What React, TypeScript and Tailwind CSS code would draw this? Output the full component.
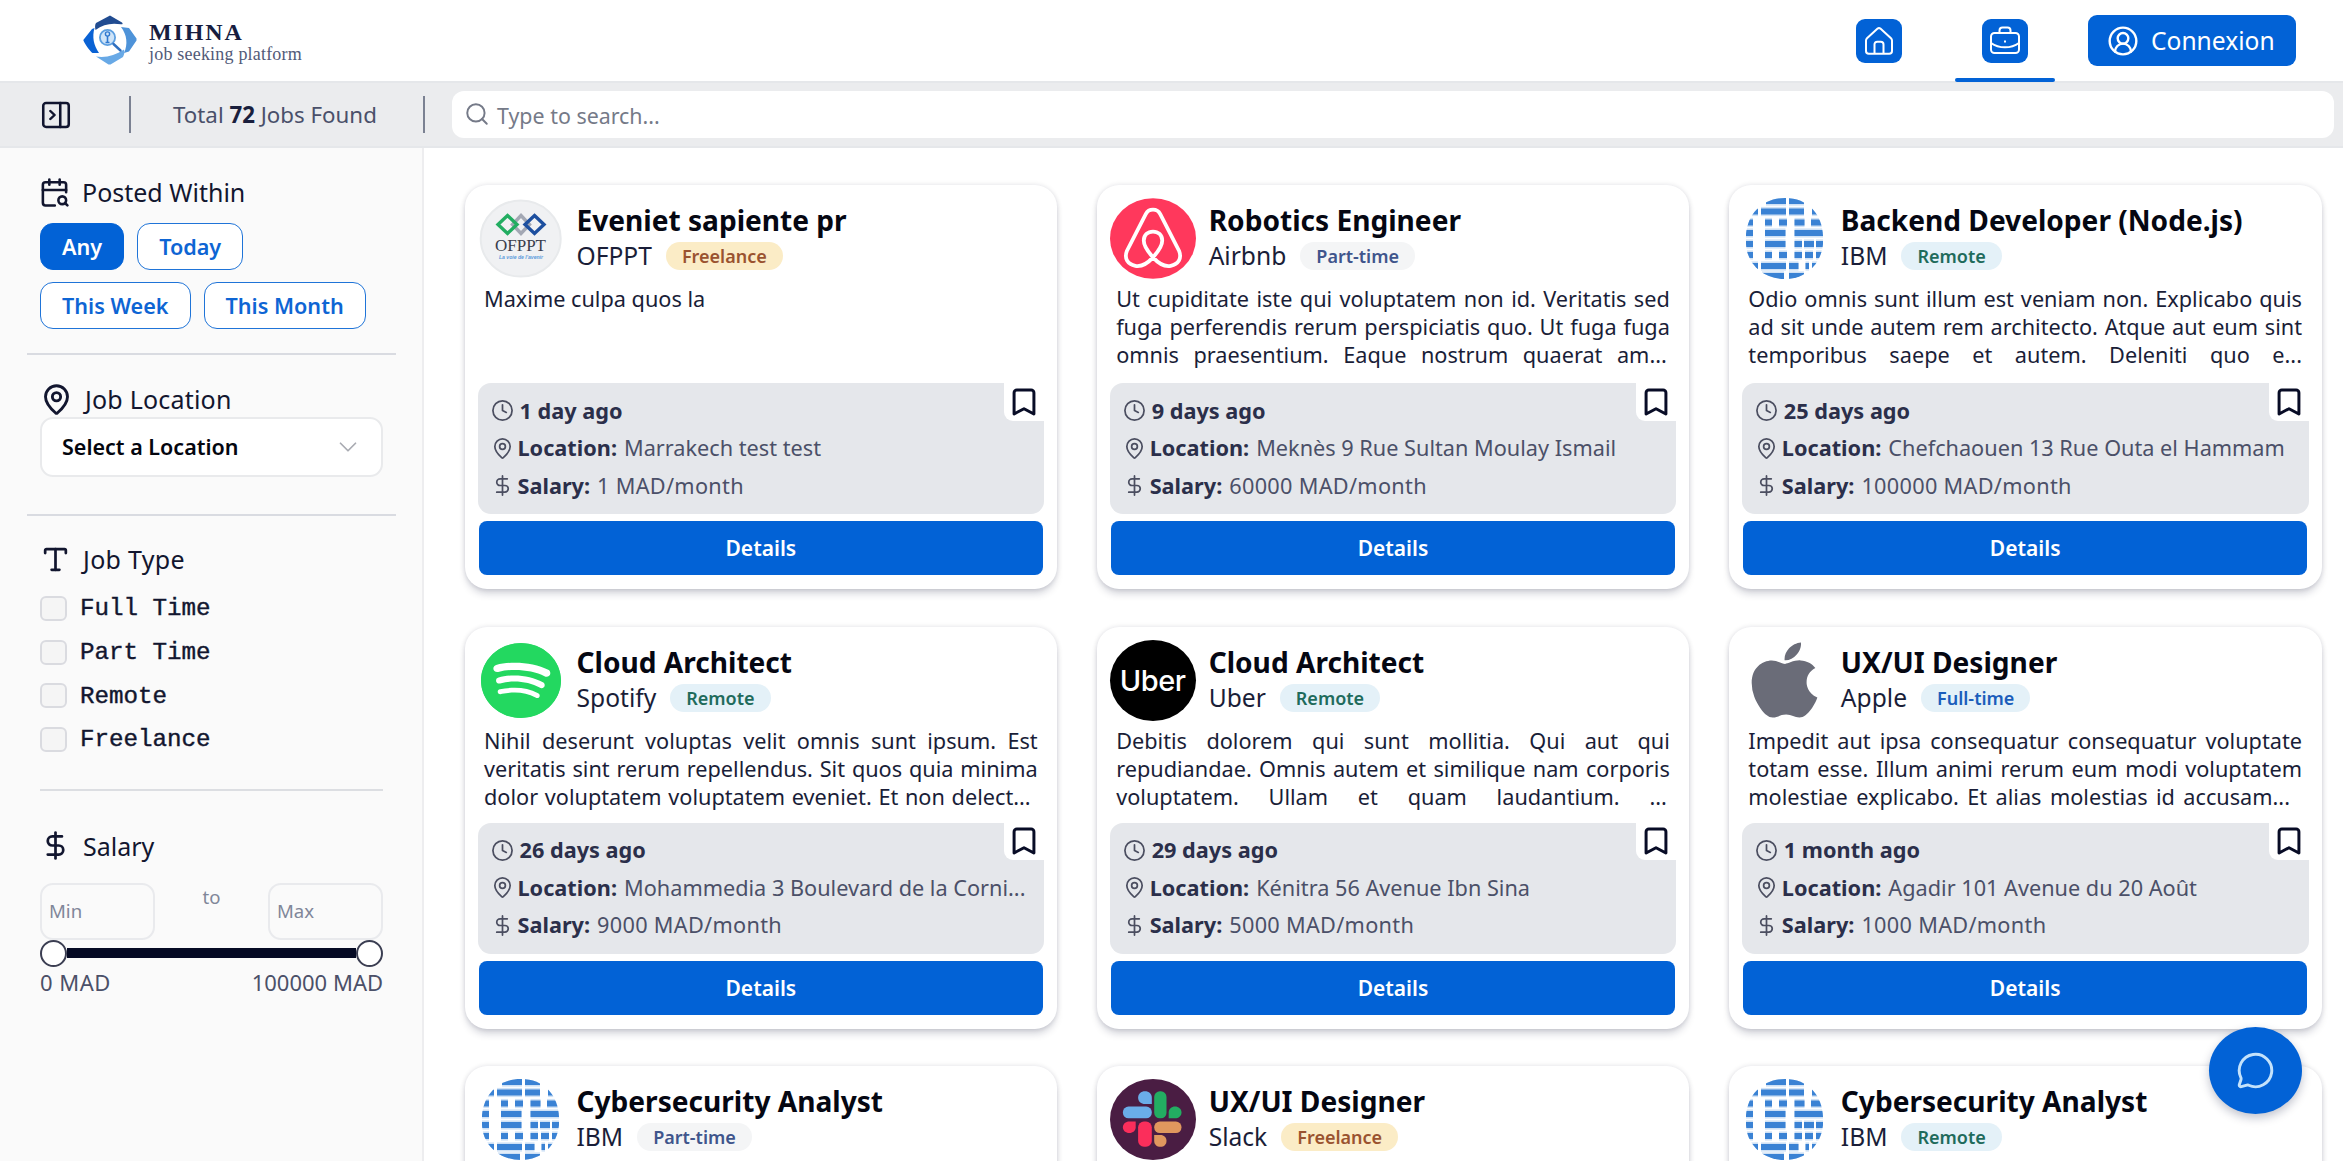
import type { ReactNode } from "react";
import {
  Bookmark,
  CalendarSearch,
  ChevronDown,
  CircleUserRound,
  Clock,
  DollarSign,
  MapPin,
  MessageCircle,
  PanelRightClose,
  Search,
  Type,
} from "lucide-react";
import { FaApple, FaSpotify } from "react-icons/fa";

type JobKind = "Freelance" | "Part-time" | "Remote" | "Full-time";

type JobDetails = {
  lines: string[];
  // Space left after the ellipsis on the clamped line.
  lastLineInset: string;
  age: string;
  location: string;
  salary: string;
};

type Job = {
  title: string;
  company: string;
  kind: JobKind;
  details?: JobDetails;
};

const badgeStyles: Record<JobKind, string> = {
  Freelance: "bg-[#fbecc6] text-[#9a5330]",
  "Part-time": "bg-[#f4f5f6] text-[#40558c]",
  Remote: "bg-[#e4f1f8] text-[#1f6b5c]",
  "Full-time": "bg-[#e4f1f8] text-[#1b5dbb]",
};

const jobs: Job[] = [
  {
    title: "Eveniet sapiente pr",
    company: "OFPPT",
    kind: "Freelance",
    details: {
      lines: ["Maxime culpa quos la"],
      lastLineInset: "",
      age: "1 day ago",
      location: "Marrakech test test",
      salary: "1 MAD/month",
    },
  },
  {
    title: "Robotics Engineer",
    company: "Airbnb",
    kind: "Part-time",
    details: {
      lines: [
        "Ut cupiditate iste qui voluptatem non id. Veritatis sed",
        "fuga perferendis rerum perspiciatis quo. Ut fuga fuga",
        "omnis praesentium. Eaque nostrum quaerat am...",
      ],
      lastLineInset: "last:pr-[3px]",
      age: "9 days ago",
      location: "Meknès 9 Rue Sultan Moulay Ismail",
      salary: "60000 MAD/month",
    },
  },
  {
    title: "Backend Developer (Node.js)",
    company: "IBM",
    kind: "Remote",
    details: {
      lines: [
        "Odio omnis sunt illum est veniam non. Explicabo quis",
        "ad sit unde autem rem architecto. Atque aut eum sint",
        "temporibus saepe et autem. Deleniti quo e...",
      ],
      lastLineInset: "",
      age: "25 days ago",
      location: "Chefchaouen 13 Rue Outa el Hammam",
      salary: "100000 MAD/month",
    },
  },
  {
    title: "Cloud Architect",
    company: "Spotify",
    kind: "Remote",
    details: {
      lines: [
        "Nihil deserunt voluptas velit omnis sunt ipsum. Est",
        "veritatis sint rerum repellendus. Sit quos quia minima",
        "dolor voluptatem voluptatem eveniet. Et non delect...",
      ],
      lastLineInset: "last:pr-[7px]",
      age: "26 days ago",
      location: "Mohammedia 3 Boulevard de la Corni...",
      salary: "9000 MAD/month",
    },
  },
  {
    title: "Cloud Architect",
    company: "Uber",
    kind: "Remote",
    details: {
      lines: [
        "Debitis dolorem qui sunt mollitia. Qui aut qui",
        "repudiandae. Omnis autem et similique nam corporis",
        "voluptatem. Ullam et quam laudantium. ...",
      ],
      lastLineInset: "last:pr-[3px]",
      age: "29 days ago",
      location: "Kénitra 56 Avenue Ibn Sina",
      salary: "5000 MAD/month",
    },
  },
  {
    title: "UX/UI Designer",
    company: "Apple",
    kind: "Full-time",
    details: {
      lines: [
        "Impedit aut ipsa consequatur consequatur voluptate",
        "totam esse. Illum animi rerum eum modi voluptatem",
        "molestiae explicabo. Et alias molestias id accusam...",
      ],
      lastLineInset: "last:pr-[12px]",
      age: "1 month ago",
      location: "Agadir 101 Avenue du 20 Août",
      salary: "1000 MAD/month",
    },
  },
  { title: "Cybersecurity Analyst", company: "IBM", kind: "Part-time" },
  { title: "UX/UI Designer", company: "Slack", kind: "Freelance" },
  { title: "Cybersecurity Analyst", company: "IBM", kind: "Remote" },
];

// Each row of the striped mark: vertical centre, then [start, end] pairs.
const ibmRows: { y: number; bars: [number, number][] }[] = [
  { y: 3, bars: [[24, 44], [47, 62]] },
  { y: 13.5, bars: [[9, 16], [19, 44], [47, 62], [70, 81]] },
  { y: 24.5, bars: [[4, 11], [23, 30], [37, 45], [52.5, 62.5], [69, 81]] },
  { y: 35, bars: [[4, 11], [23, 43.5], [52.5, 81]] },
  { y: 46, bars: [[4, 11], [23, 43.5], [52.5, 60], [62, 72], [74, 81]] },
  { y: 57, bars: [[4, 11], [23, 30], [37, 45], [52.5, 60], [63, 71], [74, 81]] },
  { y: 68, bars: [[9, 16], [19, 44], [47, 56.5], [63.5, 67], [70, 77]] },
  { y: 78, bars: [[20, 42], [47, 62]] },
];

function IbmLogo() {
  return (
    <svg viewBox="0 0 86 81" className="h-[81px] w-[86px]">
      <defs>
        <clipPath id="ibm-clip">
          <path d="M43 0 C66 0 80 16 81 38 V46 C79 66 64 81 43 81 C21 81 5 66 4 46 V36 C6 15 21 0 43 0Z" />
        </clipPath>
      </defs>
      <g clipPath="url(#ibm-clip)">
        {ibmRows.map((row) =>
          row.bars.map(([from, to]) => (
            <g key={`${row.y}-${from}`}>
              <rect x={from} y={row.y - 4.6} width={to - from} height="9.2" fill="#cfe1f5" />
              <rect x={from} y={row.y - 3} width={to - from} height="6" fill="#3a82d4" />
            </g>
          )),
        )}
      </g>
    </svg>
  );
}

function OfpptLogo() {
  return (
    <svg viewBox="0 0 86 81" className="h-[81px] w-[86px]">
      <ellipse cx="42.7" cy="40.6" rx="40" ry="38" fill="#f0f1f3" stroke="#e8eaec" strokeWidth="2" />
      <g fill="none" strokeWidth="3.4">
        <path d="M43 17.5 L51.5 26.5 L43 35.5 L34.5 26.5Z" stroke="#a3a8b4" />
        <path d="M29.5 17.5 L39 26.5 L29.5 35.5 L20 26.5Z" stroke="#22ad61" />
        <path d="M56.5 17.5 L66 26.5 L56.5 35.5 L47 26.5Z" stroke="#1d4f9f" />
      </g>
      <text x="42.5" y="53" textAnchor="middle" textLength="51" lengthAdjust="spacingAndGlyphs" fontSize="17" fill="#3a3d4c" fontFamily="Liberation Serif, serif">
        OFPPT
      </text>
      <text x="43" y="61" textAnchor="middle" textLength="44" lengthAdjust="spacingAndGlyphs" fontSize="6" fontStyle="italic" fontWeight="700" fill="#5b9bdc" fontFamily="Liberation Sans, sans-serif">
        La voie de l&apos;avenir
      </text>
    </svg>
  );
}

function AirbnbLogo() {
  return (
    <svg viewBox="0 0 86.6 81" className="h-[81px] w-[86px]">
      <ellipse cx="43.3" cy="40.5" rx="43.3" ry="40.5" fill="#ff385c" />
      <path
        d="M43.3 59.5C37 66.5 31 69 25.5 68C18 66.5 14 61 17 53L36 16C39 10 47.6 10 50.6 16L69.6 53C72.6 61 68.6 66.5 61.1 68C55.6 69 49.6 66.5 43.3 59.5C38 53.5 34 48 34 42.5C34 37 38 33.5 43.3 33.5C48.6 33.5 52.6 37 52.6 42.5C52.6 48 48.6 53.5 43.3 59.5Z"
        fill="none"
        stroke="#ffffff"
        strokeWidth="3.8"
      />
    </svg>
  );
}

function UberLogo() {
  return (
    <div className="flex h-[81px] w-[86px] items-center justify-center rounded-[50%] bg-black font-['Inter',sans-serif] text-[29px] font-medium leading-none tracking-[-0.5px] text-white">
      Uber
    </div>
  );
}

function SpotifyLogo() {
  return (
    <div className="flex h-[75px] w-[80px] items-center justify-center rounded-[50%] bg-[#23d860]">
      <div className="flex h-[60px] w-[66px] items-center justify-center rounded-[50%] bg-white">
        <FaSpotify preserveAspectRatio="none" className="h-[77px] w-[80px] shrink-0 text-[#23d860]" />
      </div>
    </div>
  );
}

function AppleLogo() {
  return <FaApple preserveAspectRatio="none" className="h-[86px] w-[67px] text-[#6a6c78]" />;
}

function SlackLogo() {
  return (
    <svg viewBox="0 0 86 81" className="h-[81px] w-[86px]">
      <ellipse cx="43" cy="40.5" rx="43" ry="40.5" fill="#4a1d43" />
      <g fill="#6aade8">
        <path d="M41.8 25H35C31 25 28.1 22.5 28.1 18.7S31 12.3 35 12.3S41.8 15 41.8 18.7Z" />
        <rect x="12.9" y="27.5" width="28.9" height="11.8" rx="5.6" />
      </g>
      <g fill="#23ad62">
        <rect x="44.2" y="12.3" width="12.3" height="27" rx="5.6" />
        <path d="M58.7 39.3V33.5C58.7 30 61.5 27.5 65 27.5S71.5 30 71.5 33.5S68.5 39.3 65 39.3Z" />
      </g>
      <g fill="#fb2e5b">
        <path d="M25.7 42.5V48.2C25.7 51.5 23 54 19.3 54S12.9 51.5 12.9 48.2S15.7 42.5 19.3 42.5Z" />
        <rect x="28.1" y="42.5" width="13.7" height="25.3" rx="5.8" />
      </g>
      <g fill="#e0975e">
        <rect x="44.2" y="42.5" width="27.3" height="11.6" rx="5.6" />
        <path d="M44.2 56H50.4C54 56 56.5 58.5 56.5 62S54 67.8 50.4 67.8S44.2 65.5 44.2 62Z" />
      </g>
    </svg>
  );
}

const logos: Record<string, () => ReactNode> = {
  OFPPT: OfpptLogo,
  Airbnb: AirbnbLogo,
  IBM: IbmLogo,
  Spotify: SpotifyLogo,
  Uber: UberLogo,
  Apple: AppleLogo,
  Slack: SlackLogo,
};

function BrandMark() {
  return (
    <svg viewBox="0 0 54 50" className="h-[50px] w-[54px]">
      <path d="M13 8L27 0.5L39 7.5C40 8.5 40 9.5 38 9.3C28 7.5 20 9.5 12.5 15C11.8 12 12 9.5 13 8Z" fill="#214c91" />
      <path d="M38 12L46 13L53.5 23.5V25.5L46 36.5L41 38C45 29 44 20 38 12Z" fill="#4e93d9" />
      <path d="M9 14L11.5 13C9 22 10.5 30 16 38H9.5C7.5 37 0.5 27 0.3 25Z" fill="#0a62d4" />
      <path d="M13 41.5C23 43 32 40.5 41 34.5C42 37 41 40 40 42L27.5 49.5H25.5Z" fill="#68a9e6" />
      <circle cx="24.5" cy="22.5" r="7.6" fill="#cfe4f8" stroke="#5d9fe0" strokeWidth="1.8" />
      <circle cx="24.5" cy="19" r="2.1" fill="none" stroke="#2f78cf" strokeWidth="1.4" />
      <path d="M24.5 21V27M22.5 27.5H26.5" stroke="#2f78cf" strokeWidth="1.6" />
      <path d="M30.5 29L37.5 35.5" stroke="#2f6fc0" strokeWidth="2.4" strokeLinecap="round" />
    </svg>
  );
}

function Header() {
  return (
    <header className="flex h-[81px] items-center justify-between bg-white pl-[83px] pr-[47px]">
      <div className="flex items-center gap-3 pb-px">
        <BrandMark />
        <div className="pt-[2px] font-['Liberation_Serif',serif]">
          <p className="text-[24px] font-bold leading-[25px] tracking-[1.9px] text-[#171d3f]">MIHNA</p>
          <p className="text-[18px] leading-[18px] tracking-[0.2px] text-[#525a78]">job seeking platform</p>
        </div>
      </div>
      <nav className="flex h-full items-center">
        <a className="flex h-[44px] w-[46px] items-center justify-center rounded-[9px] bg-[#0262d6]">
          <svg viewBox="0 0 28 28" className="h-[28px] w-[28px] fill-none stroke-white stroke-2">
            <path d="M1 13.5C1 12.5 1.4 11.8 2 11.2L12.6 1.6C13.5 0.9 14.5 0.9 15.4 1.6L26 11.2C26.6 11.8 27 12.5 27 13.5V24C27 25.8 26 26.8 24.2 26.8H3.8C2 26.8 1 25.8 1 24Z" />
            <path d="M9.5 26.5V17.5C9.5 15.8 10.5 14.8 12.2 14.8H15.8C17.5 14.8 18.5 15.8 18.5 17.5V26.5" />
          </svg>
        </a>
        <div className="relative ml-[53px] flex h-full w-[100px] items-center justify-center">
          <a className="flex h-[44px] w-[46px] items-center justify-center rounded-[9px] bg-[#0262d6]">
            <svg viewBox="0 0 30 28" className="mb-[2px] h-[28px] w-[30px] fill-none stroke-white stroke-2">
              <rect x="1" y="7" width="28" height="20" rx="3.5" />
              <path d="M9.5 7V4.5C9.5 2.5 10.5 1.5 12.5 1.5H17.5C19.5 1.5 20.5 2.5 20.5 4.5V7" />
              <path d="M1 17C9 22.8 21 22.8 29 17" />
              <path d="M15 14.6V16.6" />
            </svg>
          </a>
          <span className="absolute inset-x-0 -bottom-px h-1 rounded-full bg-[#0262d6]" />
        </div>
        <button className="ml-[33px] flex h-[51px] w-[208px] items-center rounded-[9px] bg-[#0262d6] pl-[19px] text-[24.6px] text-white">
          <CircleUserRound strokeWidth={1.8} className="mr-[12px] size-[32px]" />
          <span className="pt-[2px]">Connexion</span>
        </button>
      </nav>
    </header>
  );
}

function Toolbar() {
  return (
    <div className="flex h-[67px] items-center border-y-2 border-[#e5e7ea] bg-[#ebecee] pr-[9px]">
      <PanelRightClose preserveAspectRatio="none" strokeWidth={1.8} className="ml-[39px] h-[32px] w-[34px] text-[#11152f]" />
      <span className="ml-[56px] h-[37px] w-[2px] bg-[#7b8192]" />
      <p className="ml-[42px] w-[250px] whitespace-nowrap pt-px text-[22.3px] text-[#4a506a]">
        Total <span className="font-bold text-[#1a1f3d]">72</span> Jobs Found
      </p>
      <span className="h-[37px] w-[2px] bg-[#7b8192]" />
      <label className="ml-[27px] flex h-[47px] flex-1 items-center gap-[7px] rounded-xl bg-white pl-[12px] text-[21.4px] text-[#757a88]">
        <Search strokeWidth={1.8} className="-mt-px size-[26px]" />
        <span className="pt-[3px]">Type to search...</span>
      </label>
    </div>
  );
}

function FilterHeading({ icon, children }: { icon: ReactNode; children: ReactNode }) {
  return (
    <div className="flex h-[34px] items-center gap-[12px] text-[25px] leading-[34px] text-[#12162f]">
      {icon}
      <span>{children}</span>
    </div>
  );
}

function Pill({ children, active }: { children: ReactNode; active?: boolean }) {
  return (
    <button
      className={`h-[47px] rounded-[13px] border-[1.5px] px-[21px] text-[21.6px] font-semibold leading-none ${
        active ? "border-[#0262d6] bg-[#0262d6] text-white" : "border-[#1f74d8] bg-white text-[#0e65d4]"
      }`}
    >
      {children}
    </button>
  );
}

function Sidebar() {
  return (
    <aside className="flex w-[424px] shrink-0 flex-col border-r-2 border-[#ededef] bg-[#fafafa] pl-[40px] pr-[39px] pt-[27px]">
      <FilterHeading icon={<CalendarSearch strokeWidth={2} className="-ml-px size-[31px]" />}>Posted Within</FilterHeading>
      <div className="mt-[14px] flex flex-wrap gap-x-[13px] gap-y-[12px]">
        <Pill active>Any</Pill>
        <Pill>Today</Pill>
        <Pill>This Week</Pill>
        <Pill>This Month</Pill>
      </div>
      <hr className="-mx-[13px] mt-[24px] border-t-2 border-[#d9dbe1]" />
      <div className="mt-[27px]">
        <FilterHeading icon={<MapPin strokeWidth={2.1} className="size-[33px]" />}>
          <span className="tracking-[0.2px]">Job Location</span>
        </FilterHeading>
      </div>
      <button className="mt-px flex h-[60px] items-center justify-between rounded-[13px] border-2 border-[#e9eaec] bg-white pl-[20px] pr-[18px] text-[21.5px] font-semibold text-[#04060f]">
        Select a Location
        <ChevronDown strokeWidth={1.4} className="size-[30px] text-[#a9abb2]" />
      </button>
      <hr className="-mx-[13px] mt-[37px] border-t-2 border-[#d9dbe1]" />
      <div className="mt-[26px]">
        <FilterHeading icon={<Type strokeWidth={2.1} className="size-[31px]" />}>
          <span className="tracking-[0.3px]">Job Type</span>
        </FilterHeading>
      </div>
      <div className="mt-[18px] flex flex-col gap-[13px] font-['Liberation_Mono',monospace] text-[24.2px] text-[#12162f]">
        {["Full Time", "Part Time", "Remote", "Freelance"].map((label) => (
          <label key={label} className="flex h-[30.7px] items-center gap-[13px] [-webkit-text-stroke:0.4px]">
            <span className="-mt-[2px] h-[25px] w-[27px] rounded-[6px] border-2 border-[#dadbe0] bg-[#f5f5f5]" />
            {label}
          </label>
        ))}
      </div>
      <hr className="mt-[33px] border-t-2 border-[#dcdee2]" />
      <div className="mt-[38px]">
        <FilterHeading icon={<DollarSign strokeWidth={2.1} className="size-[31px]" />}>Salary</FilterHeading>
      </div>
      <div className="mt-[20px] flex items-start justify-between text-[18.6px] text-[#808699]">
        <span className="flex h-[57px] w-[115px] items-center rounded-[13px] border-2 border-[#e9eaed] pl-[7px]">Min</span>
        <span className="leading-[27px]">to</span>
        <span className="flex h-[57px] w-[115px] items-center rounded-[13px] border-2 border-[#e9eaed] pl-[7px]">Max</span>
      </div>
      <div className="flex h-[27px] items-center justify-between">
        <span className="size-[27px] shrink-0 rounded-full border-2 border-[#3b3e52] bg-white" />
        <span className="h-[10px] flex-1 bg-[#050a24]" />
        <span className="size-[27px] shrink-0 rounded-full border-2 border-[#3b3e52] bg-white" />
      </div>
      <div className="-mt-px flex justify-between text-[22px] leading-[32px] text-[#4b5068]">
        <span className="tracking-[0.5px]">0 MAD</span>
        <span>100000 MAD</span>
      </div>
    </aside>
  );
}

function MetaRow({ icon, label, children }: { icon: ReactNode; label: string; children: ReactNode }) {
  return (
    <p className="flex h-[37.5px] items-center gap-[4px] whitespace-nowrap">
      {icon}
      <span className="pt-px font-bold text-[#2b2f4a]">{label}</span>
      <span className="pl-[3px] pt-px">{children}</span>
    </p>
  );
}

function JobCard({ job }: { job: Job }) {
  const Logo = logos[job.company];
  const { details } = job;
  return (
    <article className="flex flex-col rounded-[22px] bg-white px-[13px] pb-[14px] pt-[13px] shadow-[0_0_5px_rgba(10,15,50,0.13),0_6px_8px_-2px_rgba(10,15,50,0.2)]">
      <div className="flex items-center gap-[13px]">
        <div className="flex h-[81px] w-[86px] items-center justify-center">
          <Logo />
        </div>
        <div className="flex flex-col gap-[2px]">
          <h2 className="whitespace-nowrap text-[28.1px] font-bold leading-[33px] text-[#050712]">{job.title}</h2>
          <div className="flex h-[34px] items-center gap-[14px] text-[24.6px] leading-[34px] text-[#1a1e38]">
            {job.company}
            <span className={`flex h-[28px] items-center rounded-full px-[16px] text-[18px] font-semibold leading-none ${badgeStyles[job.kind]}`}>
              {job.kind}
            </span>
          </div>
        </div>
      </div>
      {details && (
        <>
          <div className="flex-1 px-[6.5px] pt-[6px] text-[21.7px] leading-[28.2px] text-[#1a1e38]">
            {details.lines.map((line) => (
              <p
                key={line}
                className={`whitespace-nowrap ${details.lines.length > 1 ? "[text-align-last:justify]" : ""} ${details.lastLineInset}`}
              >
                {line}
              </p>
            ))}
          </div>
          <div className="relative h-[131px] rounded-[13px] bg-[#e5e7eb] pl-[13px] pt-[9px] text-[21.7px] text-[#4b5068]">
            <p className="flex h-[37.5px] items-center gap-[6px] font-bold text-[#2b2f4a]">
              <Clock strokeWidth={1.8} className="size-[23px] text-[#4b4e60]" />
              <span className="pt-px">{details.age}</span>
            </p>
            <MetaRow icon={<MapPin strokeWidth={1.8} className="size-[23px] text-[#4b4e60]" />} label="Location:">
              {details.location}
            </MetaRow>
            <MetaRow icon={<DollarSign strokeWidth={1.8} className="size-[23px] text-[#4b4e60]" />} label="Salary:">
              <span className="tracking-[0.3px]">{details.salary}</span>
            </MetaRow>
            <button className="absolute right-0 top-0 flex h-[37.5px] w-[40px] items-center justify-center rounded-bl-[9px] bg-white">
              <Bookmark preserveAspectRatio="none" strokeWidth={2.1} className="h-[32px] w-[34px] text-[#080c26]" />
            </button>
          </div>
          <button className="mx-[1.5px] mt-[7px] h-[54px] rounded-[8px] bg-[#0262d6] pt-[2px] text-[21px] font-semibold text-white">
            Details
          </button>
        </>
      )}
    </article>
  );
}

export default function App() {
  return (
    <div className="relative flex h-screen w-full flex-col overflow-hidden bg-white font-['Noto_Sans',sans-serif]">
      <Header />
      <Toolbar />
      <div className="flex min-h-0 flex-1">
        <Sidebar />
        <main className="flex-1 overflow-hidden pl-[40.5px] pr-[21.5px] pt-[37px]">
          <div className="grid grid-cols-3 grid-rows-[404px_402px_402px] gap-x-[39.5px] gap-y-[37.5px]">
            {jobs.map((job, index) => (
              <JobCard key={index} job={job} />
            ))}
          </div>
        </main>
      </div>
      <button className="absolute bottom-[47px] right-[41px] flex h-[87px] w-[93px] items-center justify-center rounded-[50%] bg-[#0262d6] shadow-[0_4px_10px_rgba(10,20,60,0.25)]">
        <MessageCircle strokeWidth={1.8} className="size-[39px] text-[#c4e2fb]" />
      </button>
    </div>
  );
}
